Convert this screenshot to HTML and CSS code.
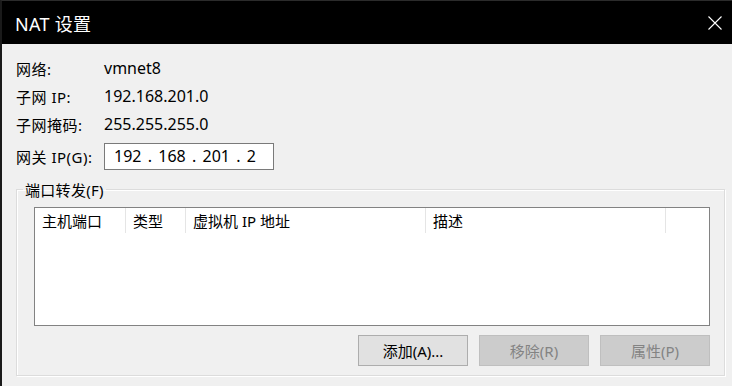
FILE: index.html
```html
<!DOCTYPE html>
<html lang="zh-CN">
<head>
<meta charset="utf-8">
<title>NAT 设置</title>
<link rel="stylesheet" href="styles.css">
</head>
<body>
<div class="window">
  <div class="titlebar">
    <span class="title">NAT 设置</span>
    <svg class="close" width="14" height="14" viewBox="0 0 14 14"><path d="M0.5 0.5 L13.5 13.5 M13.5 0.5 L0.5 13.5" stroke="#fff" stroke-width="1.1" fill="none"/></svg>
  </div>
  <div class="body">
    <div class="fields">
      <div class="row"><span class="lbl">网络:</span><span class="val">vmnet8</span></div>
      <div class="row"><span class="lbl">子网 IP:</span><span class="val">192.168.201.0</span></div>
      <div class="row"><span class="lbl">子网掩码:</span><span class="val">255.255.255.0</span></div>
      <div class="row gw"><span class="lbl">网关 IP(G):</span>
        <div class="ipbox"><span class="oct">192</span><span class="dot">.</span><span class="oct">168</span><span class="dot">.</span><span class="oct">201</span><span class="dot">.</span><span class="oct last">2</span></div>
      </div>
    </div>
    <fieldset class="group">
      <legend>端口转发(F)</legend>
      <div class="list">
        <div class="head">
          <div class="col c1">主机端口</div>
          <div class="col c2">类型</div>
          <div class="col c3">虚拟机 IP 地址</div>
          <div class="col c4">描述</div>
          <div class="col c5"></div>
        </div>
      </div>
      <div class="buttons">
        <button class="btn">添加(A)...</button>
        <button class="btn dis">移除(R)</button>
        <button class="btn dis">属性(P)</button>
      </div>
    </fieldset>
  </div>
</div>
</body>
</html>
```
FILE: styles.css
```css
* { box-sizing: border-box; }
html, body { margin: 0; padding: 0; }
body {
  width: 732px; height: 386px; overflow: hidden;
  background: #f0f0f0;
  font-family: "Noto Sans", "Noto Sans CJK SC", sans-serif;
  font-size: 15px; color: #000;
}
.window {
  height: 386px;
  border-top: 1px solid #2b2b2b;
  border-left: 2px solid #1a1a1a;
  display: flex; flex-direction: column;
}
.titlebar {
  height: 43px; background: #000; color: #fff;
  display: flex; align-items: center; justify-content: space-between;
  padding: 0 10px 0 13px;
}
.title { font-size: 18px; letter-spacing: 0.3px; }
.close { margin-top: 1px; }
.body { flex: 1; padding: 10px 0 0 14px; }
.fields { display: flex; flex-direction: column; }
.row { height: 28px; display: flex; align-items: center; }
.lbl { width: 88px; letter-spacing: 0.5px; white-space: nowrap; }
.val { font-size: 16px; }
.gw { height: 32px; margin-top: 2px; }
.ipbox {
  width: 170px; height: 27px; background: #fff;
  border: 1px solid #7a7a7a; display: flex; align-items: center;
  padding-left: 9px; font-size: 16px;
}
.oct { display: inline-block; width: 28px; text-align: center; }
.oct.last { text-align: left; margin-left: 0; }
.dot { display: inline-block; width: 18px; text-align: center; }
.group {
  margin: 7px 7px 0 0; padding: 0 14px 0 17px;
  border: 1px solid #dcdcdc; height: 197px;
  box-shadow: inset 1px 1px 0 #fff, 1px 1px 0 #fff;
}
.group legend { padding: 0 2px; margin-left: -11px; font-size: 15px; letter-spacing: 0.3px; }
.list {
  margin-top: 7px; height: 119px; background: #fff;
  border: 1px solid #828282;
}
.head { display: flex; height: 25px; }
.col { height: 25px; display: flex; align-items: center; padding-left: 7px; border-right: 1px solid #e5e5e5; white-space: nowrap; }
.c1 { width: 91px; }
.c2 { width: 60px; }
.c3 { width: 240px; }
.c4 { width: 240px; }
.c5 { border-right: none; }
.buttons { display: flex; justify-content: flex-end; gap: 11px; margin-top: 9px; }
.btn {
  width: 110px; height: 31px; font: inherit; font-size: 15px;
  background: #e1e1e1; border: 1px solid #adadad; color: #000; padding: 0;
}
.btn.dis { background: #cccccc; border-color: #bfbfbf; color: #838383; }
```
